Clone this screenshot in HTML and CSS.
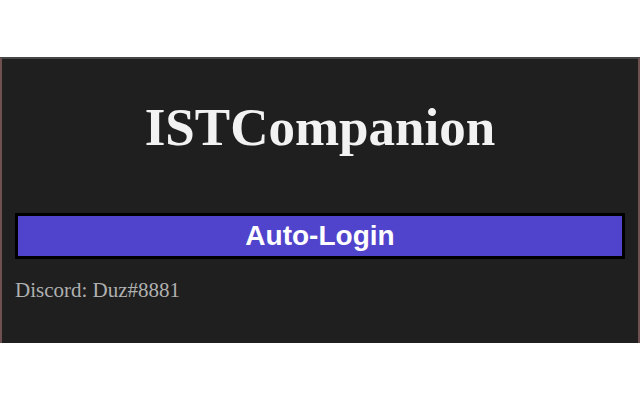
FILE: index.html
```html
<!DOCTYPE html>
<html>
<head>
	<title>ISTCompanion</title>
	<link rel="stylesheet" href="styles.css">
</head>
<body>
	<div class="popup">
		<h1 class="title">ISTCompanion</h1>
		<button class="login" id="login">Auto-Login</button>
		<p class="contact">Discord: Duz#8881</p>
	</div>
</body>
</html>
```
FILE: styles.css
```css
body{
	margin:0;
	padding:0;
	background-color: white;
	font-family: "Liberation Serif", serif;
}
.popup{
	margin-top: 57px;
	height: 284px;
	padding: 0 13px;
	background-color: rgb(31,31,31);
	border-top: 2px solid rgb(70,70,70);
	border-left: 2px solid rgb(110,80,80);
	border-right: 2px solid rgb(110,80,80);
}
.title{
	margin: 0;
	padding-top: 38px;
	text-align: center;
	font-size: 53px;
	font-weight: bold;
	line-height: 60px;
	color: rgb(242,242,242);
}
.login{
	display: block;
	width: 100%;
	height: 46px;
	margin-top: 56px;
	padding: 0;
	border: 3px solid black;
	background-color: rgb(80,67,204);
	color: white;
	font-family: "Liberation Sans", Arial, sans-serif;
	font-size: 28px;
	font-weight: bold;
	cursor: pointer;
}
.contact{
	margin: 19px 0 0 0;
	font-size: 21px;
	color: rgb(176,176,176);
}
```
